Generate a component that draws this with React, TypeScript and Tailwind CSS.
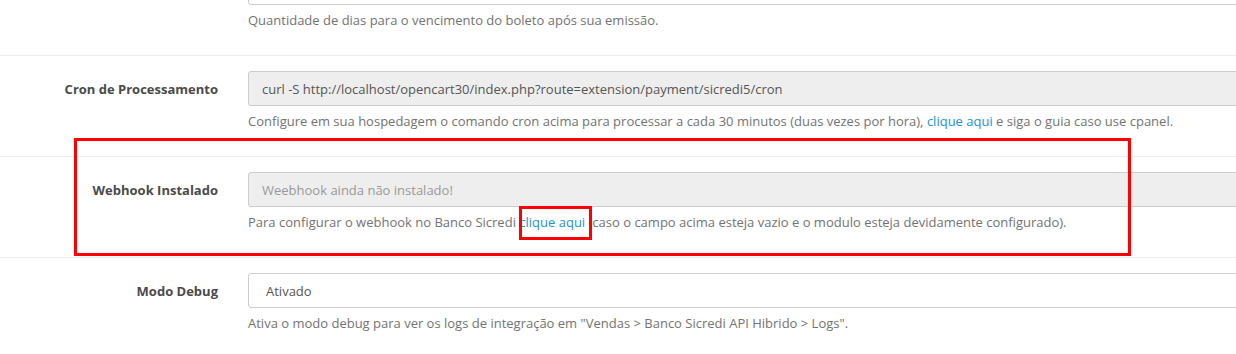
import React from "react";

const font = { fontFamily: '"Open Sans", "Liberation Sans", sans-serif' };

type RowProps = {
  label?: string;
  first?: boolean;
  children: React.ReactNode;
  help: React.ReactNode;
};

const Row: React.FC<RowProps> = ({ label, first, children, help }) => (
  <div
    className={`flex ${
      first ? "mt-[-30px] pb-[15px]" : "border-t border-[#ededed] py-[15px]"
    }`}
  >
    <div className="w-[233px] shrink-0 pr-[15px] flex items-start justify-end">
      {label && (
        <label className="h-[35px] pt-[2px] flex items-center text-[13px] font-bold text-[#4a4a4a]">
          {label}
        </label>
      )}
    </div>
    <div className="flex-1 pl-[15px]">
      {children}
      <p className="mt-[5px] mb-[10px] text-[13px] leading-5 text-[#737373]">
        {help}
      </p>
    </div>
  </div>
);

const inputBase =
  "block w-full h-[35px] border border-[#ccc] rounded-[3px] px-[13px] text-[13px] text-[#555] outline-none";

export default function App() {
  return (
    <div className="relative w-[1236px] h-[354px] overflow-hidden bg-white" style={font}>
      <div className="w-[1320px]">
        <Row
          first
          help="Quantidade de dias para o vencimento do boleto após sua emissão."
        >
          <input className={`${inputBase} bg-white`} defaultValue="" />
        </Row>

        <Row
          label="Cron de Processamento"
          help={
            <>
              Configure em sua hospedagem o comando cron acima para processar a
              cada 30 minutos (duas vezes por hora),{" "}
              <a className="text-[#1e91cf]">clique aqui</a> e siga o guia caso
              use cpanel.
            </>
          }
        >
          <input
            readOnly
            className={`${inputBase} bg-[#eee]`}
            defaultValue="curl -S http://localhost/opencart30/index.php?route=extension/payment/sicredi5/cron"
            style={font}
          />
        </Row>

        <Row
          label="Webhook Instalado"
          help={
            <>
              Para configurar o webhook no Banco Sicredi{" "}
              <a className="text-[#1e91cf]">clique aqui</a> (caso o campo acima
              esteja vazio e o modulo esteja devidamente configurado).
            </>
          }
        >
          <input
            readOnly
            className={`${inputBase} bg-[#eee] placeholder:text-[#999]`}
            placeholder="Weebhook ainda não instalado!"
            style={font}
          />
        </Row>

        <Row
          label="Modo Debug"
          help={
            <>
              Ativa o modo debug para ver os logs de integração em "Vendas &gt;
              Banco Sicredi API Hibrido &gt; Logs".
            </>
          }
        >
          <div className={`${inputBase} bg-white flex items-center pl-[17px] pt-[2px]`}>
            Ativado
          </div>
        </Row>
      </div>

      {/* annotation boxes */}
      <div className="absolute left-[74px] top-[138px] w-[1057px] h-[118px] border-[3px] border-[#ff0000]" />
      <div className="absolute left-[519px] top-[206px] w-[73px] h-[34px] border-[3px] border-[#ff0000]" />
    </div>
  );
}
